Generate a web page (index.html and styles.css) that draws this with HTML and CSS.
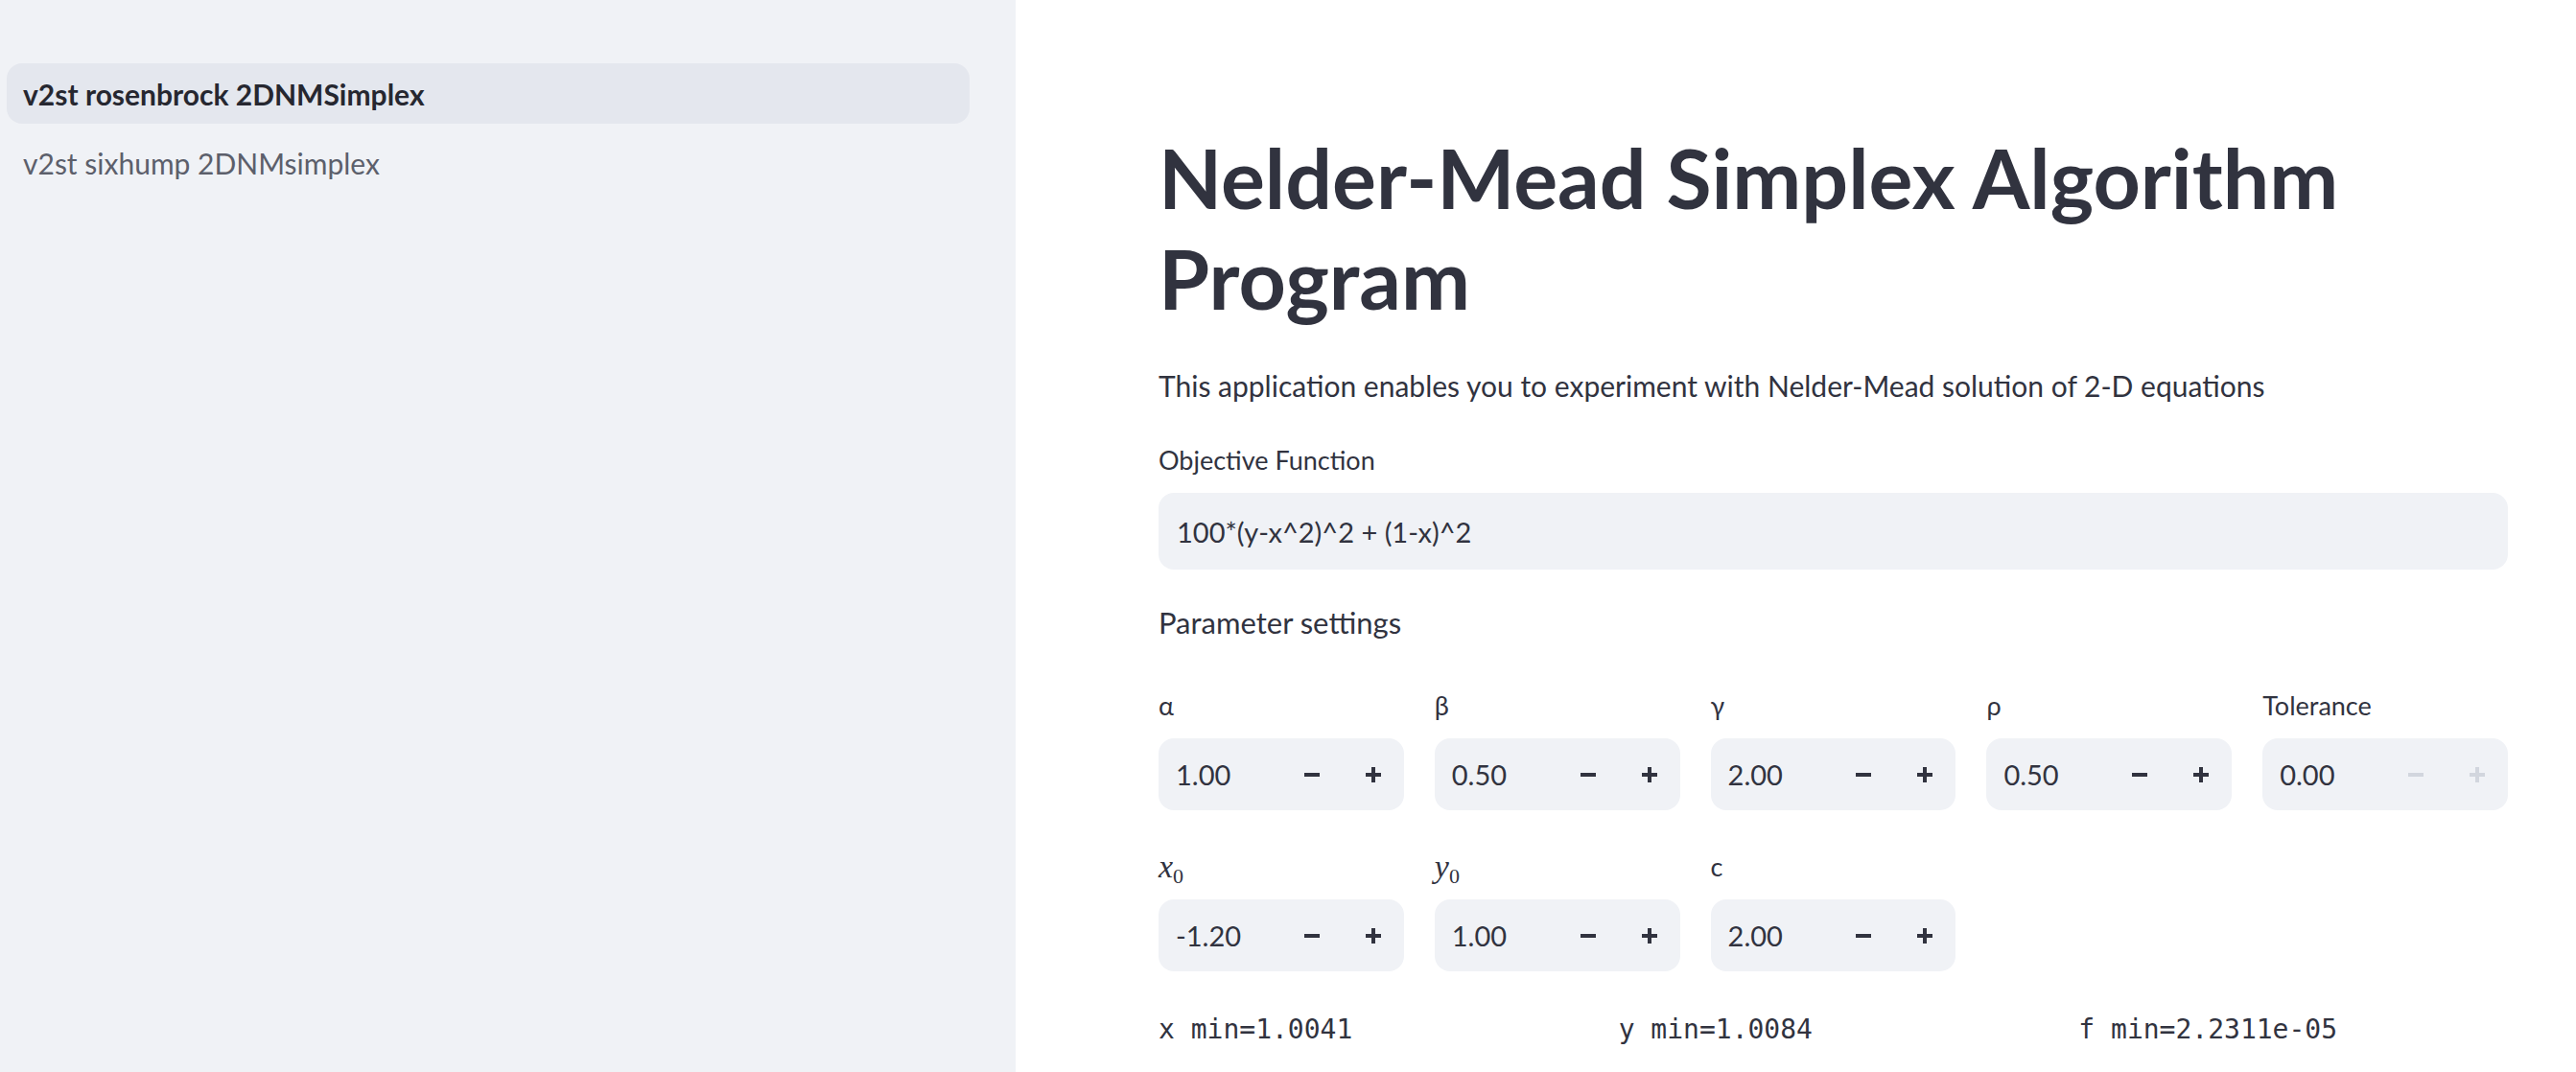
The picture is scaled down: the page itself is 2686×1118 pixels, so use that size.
FILE: index.html
```html
<!DOCTYPE html>
<html lang="en">
<head>
<meta charset="utf-8">
<title>Nelder-Mead Simplex Algorithm Program</title>
<link rel="stylesheet" href="styles.css">
</head>
<body>
<div class="app">
  <aside class="sidebar">
    <nav class="nav">
      <a class="nav-item active" href="#">v2st rosenbrock 2DNMSimplex</a>
      <a class="nav-item" href="#">v2st sixhump 2DNMsimplex</a>
    </nav>
  </aside>
  <main class="main">
    <div class="content">
      <h1 class="title">Nelder-Mead Simplex Algorithm Program</h1>
      <p class="lead">This application enables you to experiment with Nelder-Mead solution of 2-D equations</p>

      <div class="field">
        <label class="label">Objective Function</label>
        <div class="text-input">100*(y-x^2)^2 + (1-x)^2</div>
      </div>

      <p class="section">Parameter settings</p>

      <div class="grid5">
        <div class="field">
          <label class="label">α</label>
          <div class="num"><span class="num-val">1.00</span><span class="btn"><svg viewBox="0 0 18 18"><rect x="1" y="7" width="16" height="4"/></svg></span><span class="btn"><svg viewBox="0 0 18 18"><rect x="1" y="7" width="16" height="4"/><rect x="7" y="1" width="4" height="16"/></svg></span></div>
        </div>
        <div class="field">
          <label class="label">β</label>
          <div class="num"><span class="num-val">0.50</span><span class="btn"><svg viewBox="0 0 18 18"><rect x="1" y="7" width="16" height="4"/></svg></span><span class="btn"><svg viewBox="0 0 18 18"><rect x="1" y="7" width="16" height="4"/><rect x="7" y="1" width="4" height="16"/></svg></span></div>
        </div>
        <div class="field">
          <label class="label">γ</label>
          <div class="num"><span class="num-val">2.00</span><span class="btn"><svg viewBox="0 0 18 18"><rect x="1" y="7" width="16" height="4"/></svg></span><span class="btn"><svg viewBox="0 0 18 18"><rect x="1" y="7" width="16" height="4"/><rect x="7" y="1" width="4" height="16"/></svg></span></div>
        </div>
        <div class="field">
          <label class="label">ρ</label>
          <div class="num"><span class="num-val">0.50</span><span class="btn"><svg viewBox="0 0 18 18"><rect x="1" y="7" width="16" height="4"/></svg></span><span class="btn"><svg viewBox="0 0 18 18"><rect x="1" y="7" width="16" height="4"/><rect x="7" y="1" width="4" height="16"/></svg></span></div>
        </div>
        <div class="field">
          <label class="label">Tolerance</label>
          <div class="num"><span class="num-val">0.00</span><span class="btn disabled"><svg viewBox="0 0 18 18"><rect x="1" y="7" width="16" height="4"/></svg></span><span class="btn disabled"><svg viewBox="0 0 18 18"><rect x="1" y="7" width="16" height="4"/><rect x="7" y="1" width="4" height="16"/></svg></span></div>
        </div>
      </div>

      <div class="grid5 row2">
        <div class="field">
          <label class="label math"><i>x</i><sub>0</sub></label>
          <div class="num"><span class="num-val">-1.20</span><span class="btn"><svg viewBox="0 0 18 18"><rect x="1" y="7" width="16" height="4"/></svg></span><span class="btn"><svg viewBox="0 0 18 18"><rect x="1" y="7" width="16" height="4"/><rect x="7" y="1" width="4" height="16"/></svg></span></div>
        </div>
        <div class="field">
          <label class="label math"><i>y</i><sub>0</sub></label>
          <div class="num"><span class="num-val">1.00</span><span class="btn"><svg viewBox="0 0 18 18"><rect x="1" y="7" width="16" height="4"/></svg></span><span class="btn"><svg viewBox="0 0 18 18"><rect x="1" y="7" width="16" height="4"/><rect x="7" y="1" width="4" height="16"/></svg></span></div>
        </div>
        <div class="field">
          <label class="label">c</label>
          <div class="num"><span class="num-val">2.00</span><span class="btn"><svg viewBox="0 0 18 18"><rect x="1" y="7" width="16" height="4"/></svg></span><span class="btn"><svg viewBox="0 0 18 18"><rect x="1" y="7" width="16" height="4"/><rect x="7" y="1" width="4" height="16"/></svg></span></div>
        </div>
      </div>

      <div class="grid3 results">
        <code class="mono">x min=1.0041</code>
        <code class="mono">y min=1.0084</code>
        <code class="mono">f min=2.2311e-05</code>
      </div>
    </div>
  </main>
</div>
</body>
</html>
```
FILE: styles.css
```css
* { box-sizing: border-box; }
html, body { margin: 0; padding: 0; height: 100%; }
body {
  font-family: Lato, "Noto Sans", sans-serif;
  color: #31333f;
  background: #ffffff;
  overflow: hidden;
}
.app {
  display: flex;
  height: 1118px;
}
.sidebar {
  width: 1059px;
  flex: 0 0 1059px;
  background: #f0f2f6;
  padding: 66px 48px 0 7px;
}
.nav {
  display: flex;
  flex-direction: column;
  gap: 9px;
}
.nav-item {
  display: flex;
  align-items: center;
  height: 63px;
  padding: 0 17px;
  border-radius: 16px;
  font-size: 30px;
  color: #5c5f6b;
  text-decoration: none;
}
.nav-item.active {
  background: #e4e7ee;
  color: #262730;
  font-weight: 700;
}
.main {
  flex: 1;
  padding: 0 71px 0 149px;
}
.content {
  width: 1407px;
  padding-top: 132px;
}
.title {
  margin: 0;
  font-size: 86px;
  line-height: 105px;
  font-weight: 700;
  color: #31333f;
}
.lead {
  margin: 36px 0 0;
  font-size: 30px;
  line-height: 48px;
}
.field {
  display: flex;
  flex-direction: column;
}
.field > .label {
  height: 36px;
  font-size: 27px;
  line-height: 36px;
  margin-bottom: 16px;
}
.lead + .field { margin-top: 36px; }
.text-input {
  height: 80px;
  background: #f0f2f6;
  border-radius: 16px;
  padding: 0 19px;
  display: flex;
  align-items: center;
  font-size: 29px;
}
.section {
  margin: 31px 0 0;
  font-size: 31px;
  line-height: 48px;
}
.grid5 {
  display: grid;
  grid-template-columns: repeat(5, 1fr);
  gap: 32px;
  margin-top: 45px;
}
.grid5.row2 { margin-top: 41px; }
.num {
  height: 75px;
  background: #f0f2f6;
  border-radius: 16px;
  display: flex;
  align-items: center;
  font-size: 29px;
}
.num-val {
  flex: 1;
  padding-left: 18px;
}
.btn {
  width: 64px;
  height: 100%;
  display: flex;
  align-items: center;
  justify-content: center;
  fill: #31333f;
}
.btn svg { width: 18px; height: 18px; }
.btn.disabled { fill: #d2d6de; }
.field > .label.math {
  font-family: "Liberation Serif", "DejaVu Serif", serif;
  font-size: 34px;
}
.label.math sub {
  font-size: 22px;
  font-style: normal;
  line-height: 0;
  vertical-align: -6px;
}
.grid3 {
  display: grid;
  grid-template-columns: repeat(3, 1fr);
  gap: 32px;
  margin-top: 44px;
}
.mono {
  font-family: "DejaVu Sans Mono", "Liberation Mono", monospace;
  font-size: 28px;
  color: #31333f;
}
```
